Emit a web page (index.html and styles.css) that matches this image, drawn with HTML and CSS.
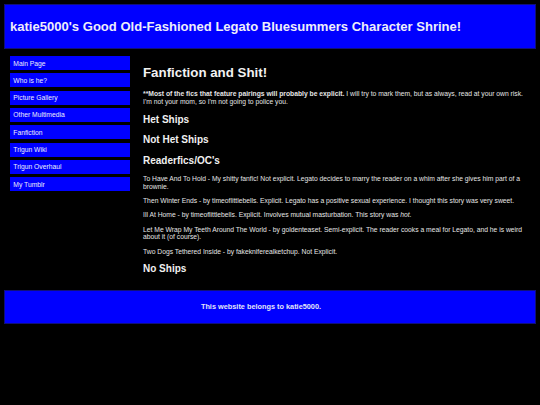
FILE: index.html
```html
<!DOCTYPE html>
<html>
<head>
<meta charset="utf-8">
<link rel="stylesheet" href="styles.css">
</head>
<body>
<div class="page">
  <header class="header">
    <h1 class="title">katie5000's Good Old-Fashioned Legato Bluesummers Character Shrine!</h1>
  </header>
  <div class="content">
    <nav class="sidebar">
      <a class="nav-link" href="#">Main Page</a>
      <a class="nav-link" href="#">Who is he?</a>
      <a class="nav-link" href="#">Picture Gallery</a>
      <a class="nav-link" href="#">Other Multimedia</a>
      <a class="nav-link" href="#">Fanfiction</a>
      <a class="nav-link" href="#">Trigun Wiki</a>
      <a class="nav-link" href="#">Trigun Overhaul</a>
      <a class="nav-link" href="#">My Tumblr</a>
    </nav>
    <main class="main">
      <h2 class="page-title">Fanfiction and Shit!</h2>
      <p class="text"><b>**Most of the fics that feature pairings will probably be explicit.</b> I will try to mark them, but as always, read at your own risk. I'm not your mom, so I'm not going to police you.</p>
      <h3 class="section">Het Ships</h3>
      <h3 class="section">Not Het Ships</h3>
      <h3 class="section">Readerfics/OC's</h3>
      <p class="text">To Have And To Hold - My shitty fanfic! Not explicit. Legato decides to marry the reader on a whim after she gives him part of a brownie.</p>
      <p class="text">Then Winter Ends - by timeoflittlebells. Explicit. Legato has a positive sexual experience. I thought this story was very sweet.</p>
      <p class="text">Ill At Home - by timeoflittlebells. Explicit. Involves mutual masturbation. This story was <i>hot</i>.</p>
      <p class="text">Let Me Wrap My Teeth Around The World - by goldenteaset. Semi-explicit. The reader cooks a meal for Legato, and he is weird about it (of course).</p>
      <p class="text">Two Dogs Tethered Inside - by fakekniferealketchup. Not Explicit.</p>
      <h3 class="section">No Ships</h3>
    </main>
  </div>
  <footer class="footer">
    <p class="footer-text">This website belongs to katie5000.</p>
  </footer>
</div>
</body>
</html>
```
FILE: styles.css
```css
html, body {
  margin: 0;
  padding: 0;
  background: #000;
}
body {
  font-family: "Liberation Sans", Arial, sans-serif;
  color: #e6e6e6;
}
.page {
  padding: 4px;
}
.header {
  background: #0000ff;
  height: 45px;
  box-sizing: border-box;
  border: 1px solid #10107a;
  display: flex;
  align-items: center;
  padding-left: 5px;
}
.title {
  margin: 0;
  font-size: 13.05px;
  font-weight: bold;
  color: #eeeefa;
  line-height: 15px;
}
.content {
  display: flex;
  align-items: flex-start;
  padding: 7px 6px 6px 6px;
}
.sidebar {
  width: 120px;
  flex: none;
  display: flex;
  flex-direction: column;
  gap: 3.33px;
}
.nav-link {
  display: flex;
  align-items: center;
  height: 14px;
  background: #0000ff;
  color: #eeeefa;
  text-decoration: none;
  font-size: 6.75px;
  padding-left: 3.3px;
}
.main {
  flex: 1;
  margin-left: 13px;
}
.page-title {
  font-size: 13.3px;
  line-height: 15.3px;
  margin: 9px 0 10px;
  color: #f2f2f2;
}
.text {
  font-size: 6.75px;
  line-height: 7.67px;
  margin: 6.67px 0;
}
.section {
  font-size: 10px;
  line-height: 11.5px;
  margin: 8px 0 9px;
  color: #f0f0f0;
}
.footer {
  background: #0000ff;
  height: 34px;
  box-sizing: border-box;
  border: 1px solid #10107a;
  display: flex;
  align-items: center;
  justify-content: center;
  padding-right: 18px;
}
.footer-text {
  margin: 0;
  font-size: 7.33px;
  font-weight: bold;
  color: #e4e4f8;
}
```
